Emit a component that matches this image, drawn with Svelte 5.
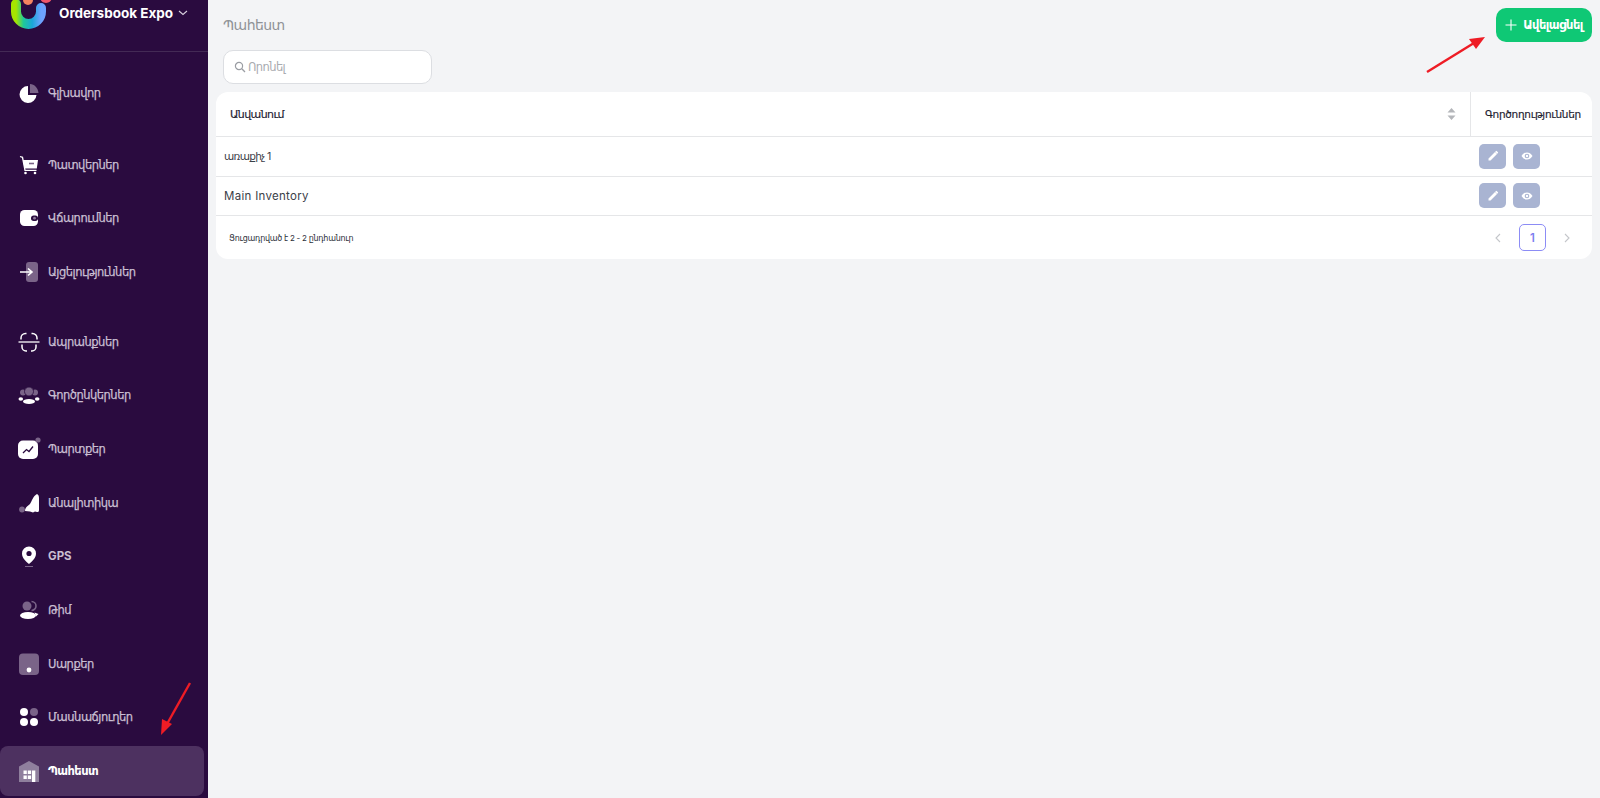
<script>
  const groups = [
    [{ t: 'Գլխավոր', i: 'pie' }],
    [
      { t: 'Պատվերներ', i: 'cart' },
      { t: 'Վճարումներ', i: 'wallet' },
      { t: 'Այցելություններ', i: 'enter' }
    ],
    [
      { t: 'Ապրանքներ', i: 'scan' },
      { t: 'Գործընկերներ', i: 'partners' },
      { t: 'Պարտքեր', i: 'chart' },
      { t: 'Անալիտիկա', i: 'analytics' },
      { t: 'GPS', i: 'pin', latin: true },
      { t: 'Թիմ', i: 'team' },
      { t: 'Սարքեր', i: 'device' },
      { t: 'Մասնաճյուղեր', i: 'grid' },
      { t: 'Պահեստ', i: 'store', active: true }
    ]
  ];
  const rows = [
    { t: 'առաքիչ 1', arm: true },
    { t: 'Main Inventory', arm: false }
  ];
</script>

<div class="page">
  <aside class="side">
    <div class="brand">
      <svg class="logo" width="44" height="34" viewBox="0 0 44 34">
        <defs>
          <linearGradient id="lg" x1="0" y1="0" x2="1" y2="0">
            <stop offset="0" stop-color="#a6e400" />
            <stop offset="0.3" stop-color="#1fc89a" />
            <stop offset="0.65" stop-color="#1aa6d8" />
            <stop offset="1" stop-color="#6ea2ff" />
          </linearGradient>
        </defs>
        <circle cx="19" cy="0" r="5" fill="#f4845f" />
        <circle cx="37" cy="-3" r="6" fill="#f0566a" />
        <path d="M7 4v7.500a12.500 12.500 0 0 0 25 0V8" fill="none" stroke="url(#lg)" stroke-width="10" stroke-linecap="round" />
      </svg>
      <span class="brand-name">Ordersbook Expo</span>
      <svg width="10" height="6" viewBox="0 0 10 6" class="chev"><path d="M1 1l4 3.500L9 1" fill="none" stroke="#d8d0de" stroke-width="1.100" /></svg>
    </div>
    <nav class="nav">
      {#each groups as g}
        <div class="group">
          {#each g as it}
            <div class="item" class:active={it.active}>
              <svg class="ico" width="24" height="24" viewBox="0 0 24 24">
                {#if it.i === 'pie'}
                  <path d="M11 5a8.500 8.500 0 1 0 8.500 9H11z" fill="#fff" />
                  <path d="M13 3c4.500.3 8 3.800 8.500 9H13z" fill="#7a6488" />
                {:else if it.i === 'cart'}
                  <path d="M3 3.500l2.500.8 2.500 13h11.500" fill="none" stroke="#fff" stroke-width="1.300" />
                  <path d="M6 7H21l-1.200 8.500H7.500z" fill="#fff" />
                  <path d="M12 10.500h5" stroke="#7a6488" stroke-width="1.600" />
                  <circle cx="8.500" cy="20" r="1.300" fill="#fff" /><circle cx="18" cy="20" r="1.300" fill="#fff" />
                {:else if it.i === 'wallet'}
                  <rect x="3" y="4" width="18" height="16" rx="4.500" fill="#fff" />
                  <rect x="14" y="9.500" width="7" height="5.500" rx="2.700" fill="#2a0b3f" />
                  <circle cx="17.500" cy="12.200" r="1.400" fill="#8d7a99" />
                {:else if it.i === 'enter'}
                  <rect x="9" y="2" width="12" height="20" rx="3" fill="#7a6488" />
                  <path d="M3 12h11M11 8.500l4 3.500-4 3.500" fill="none" stroke="#fff" stroke-width="1.600" />
                {:else if it.i === 'scan'}
                  <path d="M4 9.500V8a4.500 4.500 0 0 1 4.500-4.500h1M14.500 3.500h1A4.500 4.500 0 0 1 20 8v1.500M5 14.500V17a4 4 0 0 0 4 4h1M14 21h1a4 4 0 0 0 4-4v-2.500" fill="none" stroke="#fff" stroke-width="1.500" />
                  <path d="M1.500 12h21" stroke="#fff" stroke-width="1.300" />
                {:else if it.i === 'partners'}
                  <circle cx="6" cy="9.500" r="3" fill="#7a6488" /><circle cx="18" cy="9.500" r="3" fill="#7a6488" />
                  <circle cx="12" cy="8.500" r="4.500" fill="#7a6488" stroke="#2a0b3f" stroke-width="0.800" />
                  <ellipse cx="12" cy="18.500" rx="6" ry="2.500" fill="#fff" />
                  <ellipse cx="3.800" cy="16" rx="2.300" ry="1.800" fill="#fff" /><ellipse cx="20.200" cy="16" rx="2.300" ry="1.800" fill="#fff" />
                {:else if it.i === 'chart'}
                  <rect x="1" y="3.500" width="20" height="18.500" rx="5" fill="#fff" />
                  <circle cx="21" cy="3" r="2.600" fill="#7a6488" />
                  <path d="M6 16l3.500-3.500 2.500 2 4-5" fill="none" stroke="#2a0b3f" stroke-width="1.300" />
                {:else if it.i === 'analytics'}
                  <path d="M8 20c0-4 3-5 5-7 2-3 3-8 7-10 1.500.8 2 2 2 4v12c0 2-1 2-2 2l-2-.5-2 1-3-1z" fill="#fff" />
                  <circle cx="5" cy="18.500" r="2.900" fill="#7a6488" />
                {:else if it.i === 'pin'}
                  <path d="M12 2.500a7 7 0 0 0-7 7C5 14 9 17.500 12 20c3-2.500 7-6 7-10.500a7 7 0 0 0-7-7z" fill="#fff" />
                  <circle cx="12" cy="9.500" r="2.600" fill="#2a0b3f" />
                  <rect x="8" y="22" width="8" height="1" fill="#7a6488" />
                {:else if it.i === 'team'}
                  <path d="M14.500 3.500a4.500 4.500 0 0 1 0 9" fill="none" stroke="#7a6488" stroke-width="1.600" />
                  <circle cx="10" cy="8" r="4.500" fill="#7a6488" />
                  <ellipse cx="11" cy="17.500" rx="8" ry="3.500" fill="#fff" />
                  <path d="M17.500 14.500l4 1.500-2.500 2.500z" fill="#fff" />
                {:else if it.i === 'device'}
                  <rect x="2" y="1.500" width="20" height="21.500" rx="4" fill="#7a6488" />
                  <circle cx="12" cy="18" r="2.400" fill="#fff" />
                {:else if it.i === 'grid'}
                  <circle cx="7" cy="7" r="4" fill="#fff" />
                  <circle cx="17" cy="7" r="4" fill="#7a6488" />
                  <circle cx="7" cy="17" r="4" fill="#fff" />
                  <circle cx="17" cy="17" r="4" fill="#fff" />
                {:else if it.i === 'store'}
                  <path d="M2 7.500L12 2l10 5.500V23H2z" fill="#8f7f9d" />
                  <path d="M6.500 11.500h3.300v3.500H6.500zM10.800 11.500h3.300v3.500h-3.300zM6.500 16.500h3.300V20H6.500zM10.800 16.500h3.300V20h-3.300z" fill="#fff" />
                  <path d="M15 11.500h3.300V23H15z" fill="#fff" />
                {/if}
              </svg>
              <span class="label" class:latin={it.latin}>{it.t}</span>
            </div>
          {/each}
        </div>
      {/each}
    </nav>
  </aside>

  <main class="main">
    <div class="top">
      <h1 class="title">Պահեստ</h1>
      <button class="add">
        <svg width="12" height="12" viewBox="0 0 12 12"><path d="M6 .5v11M.5 6h11" stroke="#fff" stroke-width="1.100" /></svg>
        <span>Ավելացնել</span>
      </button>
    </div>
    <div class="search">
      <svg width="12" height="12" viewBox="0 0 12 12"><circle cx="5" cy="5" r="3.600" fill="none" stroke="#9a9da3" stroke-width="1.200" /><path d="M7.800 7.800l3.200 3.200" stroke="#9a9da3" stroke-width="1.300" /></svg>
      <span>Որոնել</span>
    </div>
    <section class="card">
      <div class="row head">
        <div class="c-name">
          <span class="hname">Անվանում</span>
          <svg width="9" height="12" viewBox="0 0 9 12"><path d="M4.500 0L8.500 4.500H.5zM4.500 12L.5 7.500h8z" fill="#b4b6ba" /></svg>
        </div>
        <div class="c-act">Գործողություններ</div>
      </div>
      {#each rows as r}
        <div class="row body">
          <div class="c-name" class:arm={r.arm}>{r.t}</div>
          <div class="c-act">
            <span class="btn">
              <svg width="12" height="12" viewBox="0 0 12 12"><path d="M1.500 8.500L8 2l2 2-6.500 6.500H1.500zM8.800 1.200l.7-.4 1.700 1.700-.4.700-.7.600-2-2z" fill="#fff" /></svg>
            </span>
            <span class="btn">
              <svg width="12" height="12" viewBox="0 0 12 12"><path d="M.5 6C2 3.500 4 2.500 6 2.500S10 3.500 11.500 6C10 8.500 8 9.500 6 9.500S2 8.500.5 6z" fill="#fff" /><circle cx="6" cy="6" r="2.300" fill="#a9b4d2" /><circle cx="6" cy="6" r="1.200" fill="#fff" /></svg>
            </span>
          </div>
        </div>
      {/each}
      <div class="foot">
        <span class="count">Ցուցադրված է 2 - 2 ընդհանուր</span>
        <div class="pager">
          <svg width="8" height="10" viewBox="0 0 8 10"><path d="M6 1L2 5l4 4" fill="none" stroke="#c4c6ca" stroke-width="1.100" /></svg>
          <span class="pg">1</span>
          <svg width="8" height="10" viewBox="0 0 8 10"><path d="M2 1l4 4-4 4" fill="none" stroke="#c4c6ca" stroke-width="1.100" /></svg>
        </div>
      </div>
    </section>
  </main>

  <svg class="arrows" width="1600" height="798" viewBox="0 0 1600 798">
    <path d="M1427 72L1474 43" stroke="#ee1c25" stroke-width="2.400" fill="none" />
    <path d="M1485 37L1469 39 1476 49z" fill="#ee1c25" />
    <path d="M190 683L167 724" stroke="#ee1c25" stroke-width="2.400" fill="none" />
    <path d="M161 735L162 719 172 724z" fill="#ee1c25" />
  </svg>
</div>

<style>
  :global(body) { margin: 0; background: #f3f4f6; }
  .page {
    display: flex;
    height: 798px;
    overflow: hidden;
    font-family: Inter, "DejaVu Sans", sans-serif;
    color: #1f2430;
    position: relative;
  }
  .side {
    width: 208px;
    flex: none;
    background: #2a0b3f;
    box-sizing: border-box;
  }
  .brand {
    height: 52px;
    box-sizing: border-box;
    border-bottom: 1px solid #432a55;
    display: flex;
    align-items: flex-start;
    padding: 0 0 0 9px;
  }
  .logo { flex: none; margin-right: 6px; }
  .brand-name { color: #fff; font-weight: 700; font-size: 13.500px; line-height: 26px; white-space: nowrap; }
  .chev { margin: 10px 0 0 5px; }
  .nav { padding-top: 14px; padding-right: 4px; }
  .group { margin-bottom: 18px; }
  .group:nth-child(2) { margin-bottom: 16px; }
  .item {
    display: flex;
    align-items: center;
    height: 53.700px;
    padding-left: 17px;
    gap: 7px;
    border-radius: 8px;
  }
  .item.active { background: #4d3160; height: 50px; margin-top: 2px; }
  .ico { flex: none; }
  .label { color: #c9bfd2; font-size: 11.500px; font-weight: 500; white-space: nowrap; letter-spacing: -0.5px; -webkit-text-stroke: 0.25px #c9bfd2; }
  .label.latin { font-weight: 700; letter-spacing: 0; -webkit-text-stroke: 0; }
  .active .label { color: #fff; font-weight: 600; letter-spacing: -0.6px; -webkit-text-stroke: 0; }
  .main { flex: 1; min-width: 0; padding: 8px 8px 0 8px; }
  .top { display: flex; justify-content: space-between; align-items: flex-start; padding-left: 7px; height: 42px; }
  .title { margin: 8px 0 0; font-size: 14px; font-weight: 400; color: #8f9297; letter-spacing: -0.6px; }
  .add {
    width: 96px;
    height: 34px;
    border: 0;
    border-radius: 10px;
    background: #0fc875;
    color: #fff;
    display: flex;
    align-items: center;
    justify-content: center;
    gap: 6px;
    font: 600 11.500px Inter, "DejaVu Sans", sans-serif;
    letter-spacing: -0.5px;
    padding: 0;
  }
  .search {
    margin-left: 7px;
    width: 209px;
    height: 34px;
    box-sizing: border-box;
    border: 1px solid #dcdee2;
    border-radius: 10px;
    background: #fff;
    display: flex;
    align-items: center;
    gap: 2px;
    padding-left: 10px;
    font-size: 11.500px;
    letter-spacing: -0.6px;
    color: #a9abb0;
  }
  .card { margin-top: 8px; background: #fff; border-radius: 12px; overflow: hidden; }
  .row { display: flex; border-bottom: 1px solid #e5e6e8; box-sizing: border-box; }
  .head { height: 45px; font-size: 11px; font-weight: 500; color: #1d2130; -webkit-text-stroke: 0.15px #1d2130; }
  .hname { letter-spacing: -0.6px; }
  .body { height: 39.500px; font-size: 11.500px; color: #3b4048; letter-spacing: 0.3px; }
  .c-name { flex: 1; display: flex; align-items: center; justify-content: space-between; padding: 0 14px 0 8px; min-width: 0; }
  .c-name.arm { font-size: 10.500px; letter-spacing: -0.7px; }
  .head .c-name { padding-left: 14px; }
  .c-act { width: 122px; flex: none; display: flex; align-items: center; box-sizing: border-box; }
  .head .c-act { border-left: 1px solid #e5e6e8; padding-left: 14px; font-size: 10.500px; letter-spacing: -0.3px; white-space: nowrap; }
  .body .c-act { gap: 7px; padding-left: 9px; }
  .btn { width: 27px; height: 25px; border-radius: 5px; background: #a9b4d2; display: flex; align-items: center; justify-content: center; }
  .foot { height: 43px; display: flex; align-items: center; justify-content: space-between; padding: 0 21px 0 13px; font-size: 8px; color: #2b2f38; }
  .count { letter-spacing: -0.25px; }
  .pager { display: flex; align-items: center; gap: 17px; }
  .pg {
    width: 27px; height: 27px; box-sizing: border-box; border: 1px solid #8c8cf5; border-radius: 5px;
    color: #7d7df0; font-size: 11.500px; font-weight: 600; display: flex; align-items: center; justify-content: center; background: #fff;
  }
  .arrows { position: absolute; left: 0; top: 0; pointer-events: none; }
</style>
